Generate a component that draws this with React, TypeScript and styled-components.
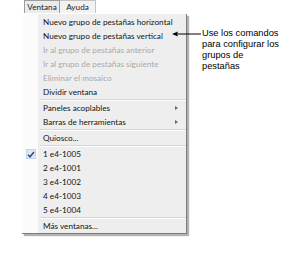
import React from 'react'
import styled, { createGlobalStyle } from 'styled-components'

const GlobalStyle = createGlobalStyle`
  body {
    margin: 0;
    background: #fff;
    font-family: Lato, "Liberation Sans", sans-serif;
  }
`

const Page = styled.div`
  position: relative;
  width: 302px;
  height: 255px;
  overflow: hidden;
  background: #fff;
`

const MenuBar = styled.div`
  display: flex;
  height: 13px;
  padding-left: 24px;
`

const Tab = styled.div<{ $open?: boolean }>`
  width: 36px;
  display: flex;
  align-items: center;
  justify-content: center;
  box-sizing: border-box;
  font-size: 8.2px;
  color: #222;
  background: ${p => (p.$open ? '#ebebeb' : '#f2f2f2')};
  border: 1px solid ${p => (p.$open ? '#9c9c9c' : '#c4c4c4')};
  border-bottom: none;
  & + & {
    border-left: none;
  }
`

const Dropdown = styled.div`
  margin: 1px 0 0 22px;
  width: 165px;
  box-sizing: border-box;
  padding-top: 1px;
  background: linear-gradient(to right, #fbfbfb 0 16px, #eeeeee 16px);
  border-right: 1px solid #7c7c7c;
  border-bottom: 1px solid #7c7c7c;
  box-shadow: 2px 2px 1px rgba(0, 0, 0, 0.3);
`

const Row = styled.div<{ $disabled?: boolean }>`
  display: flex;
  align-items: center;
  height: 14px;
  font-size: 8.2px;
  color: ${p => (p.$disabled ? '#a9a9a9' : '#141414')};
`

const Gutter = styled.div`
  width: 21px;
  height: 14px;
  display: flex;
  align-items: center;
  justify-content: center;
  flex-shrink: 0;
`

const CheckBox = styled.div`
  width: 10px;
  height: 10px;
  margin-left: -3px;
  display: flex;
  align-items: center;
  justify-content: center;
  background: #dce8f6;
  border: 1px solid #c3d5ec;
  box-sizing: border-box;
`

const Label = styled.span`
  flex: 1;
  white-space: nowrap;
`

const SubArrow = styled.span`
  width: 0;
  height: 0;
  margin-right: 8px;
  border-top: 2.5px solid transparent;
  border-bottom: 2.5px solid transparent;
  border-left: 3px solid #666;
`

const Separator = styled.div`
  margin-left: 18px;
  height: 0;
  border-top: 1px solid #d6d6d6;
  border-bottom: 1px solid #fdfdfd;
`

const Callout = styled.div`
  position: absolute;
  left: 171px;
  top: 28px;
  display: flex;
  align-items: flex-start;
`

const CalloutText = styled.div`
  margin-left: 1px;
  font-family: "Liberation Sans", Arial, sans-serif;
  font-size: 9.3px;
  line-height: 11px;
  color: #000;
`

const Check = () => (
  <svg width="8" height="7" viewBox="0 0 8 7">
    <path d="M1 3.8 L3 5.8 L7 1" fill="none" stroke="#3b4a66" strokeWidth="1.5" />
  </svg>
)

const Arrow = () => (
  <svg width="30" height="12" viewBox="0 0 30 12">
    <line x1="3" y1="6" x2="30" y2="6" stroke="#000" strokeWidth="1" />
    <path d="M1 6 L7 3.5 L6 6 L7 8.5 Z" fill="#000" />
  </svg>
)

type Item =
  | { kind: 'sep' }
  | { kind: 'item'; label: string; disabled?: boolean; sub?: boolean; checked?: boolean }

const items: Item[] = [
  { kind: 'item', label: 'Nuevo grupo de pestañas horizontal' },
  { kind: 'item', label: 'Nuevo grupo de pestañas vertical' },
  { kind: 'item', label: 'Ir al grupo de pestañas anterior', disabled: true },
  { kind: 'item', label: 'Ir al grupo de pestañas siguiente', disabled: true },
  { kind: 'item', label: 'Eliminar el mosaico', disabled: true },
  { kind: 'item', label: 'Dividir ventana' },
  { kind: 'sep' },
  { kind: 'item', label: 'Paneles acoplables', sub: true },
  { kind: 'item', label: 'Barras de herramientas', sub: true },
  { kind: 'sep' },
  { kind: 'item', label: 'Quiosco...' },
  { kind: 'sep' },
  { kind: 'item', label: '1 e4-1005', checked: true },
  { kind: 'item', label: '2 e4-1001' },
  { kind: 'item', label: '3 e4-1002' },
  { kind: 'item', label: '4 e4-1003' },
  { kind: 'item', label: '5 e4-1004' },
  { kind: 'sep' },
  { kind: 'item', label: 'Más ventanas...' },
]

export default function App() {
  return (
    <Page>
      <GlobalStyle />
      <MenuBar>
        <Tab $open>Ventana</Tab>
        <Tab>Ayuda</Tab>
      </MenuBar>
      <Dropdown>
        {items.map((it, i) =>
          it.kind === 'sep' ? (
            <Separator key={i} />
          ) : (
            <Row key={i} $disabled={it.disabled}>
              <Gutter>
                {it.checked && (
                  <CheckBox>
                    <Check />
                  </CheckBox>
                )}
              </Gutter>
              <Label>{it.label}</Label>
              {it.sub && <SubArrow />}
            </Row>
          )
        )}
      </Dropdown>
      <Callout>
        <Arrow />
        <CalloutText>
          Use los comandos
          <br />
          para configurar los
          <br />
          grupos de
          <br />
          pestañas
        </CalloutText>
      </Callout>
    </Page>
  )
}
